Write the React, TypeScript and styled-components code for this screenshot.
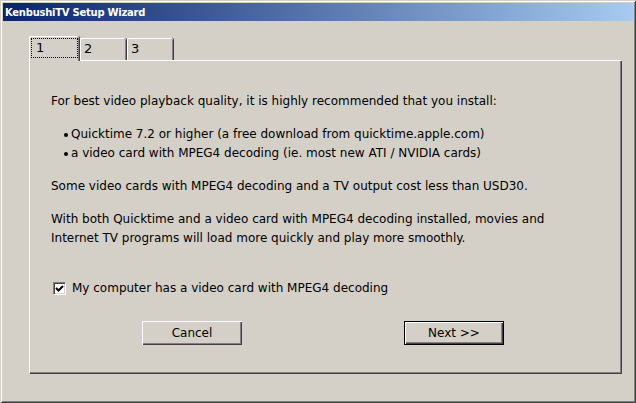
import React, { useState } from 'react'
import styled, { createGlobalStyle } from 'styled-components'

const GlobalStyle = createGlobalStyle`
  html, body {
    margin: 0;
    padding: 0;
    background: #d4d0c8;
  }
`

const tabs = ['1', '2', '3']

function App() {
  const [active, setActive] = useState(0)
  const [hasCard, setHasCard] = useState(true)

  return (
    <>
      <GlobalStyle />
      <Window>
        <TitleBar>KenbushiTV Setup Wizard</TitleBar>
        <Body>
          <TabStrip>
            {tabs.map((t, i) => (
              <Tab key={t} active={i === active} onClick={() => setActive(i)}>
                <TabLabel focused={i === active}>{t}</TabLabel>
              </Tab>
            ))}
          </TabStrip>
          <Panel>
            <Para>
              For best video playback quality, it is highly recommended that you install:
            </Para>
            <List>
              <li>Quicktime 7.2 or higher (a free download from quicktime.apple.com)</li>
              <li>a video card with MPEG4 decoding (ie. most new ATI / NVIDIA cards)</li>
            </List>
            <Para>Some video cards with MPEG4 decoding and a TV output cost less than USD30.</Para>
            <Para>
              With both Quicktime and a video card with MPEG4 decoding installed, movies and
              <br />
              Internet TV programs will load more quickly and play more smoothly.
            </Para>
            <CheckRow onClick={() => setHasCard(c => !c)}>
              <CheckBox>
                {hasCard && (
                  <svg width="9" height="9" viewBox="0 0 9 9">
                    <path d="M1 4 L3.5 6.5 L8 2" stroke="#000" strokeWidth="2" fill="none" />
                  </svg>
                )}
              </CheckBox>
              My computer has a video card with MPEG4 decoding
            </CheckRow>
            <ButtonRow>
              <Button>Cancel</Button>
              <Button primary>Next &gt;&gt;</Button>
            </ButtonRow>
          </Panel>
        </Body>
      </Window>
    </>
  )
}

const Window = styled.div`
  width: 636px;
  height: 403px;
  box-sizing: border-box;
  padding: 3px 3px 4px 3px;
  display: flex;
  flex-direction: column;
  background: #d4d0c8;
  box-shadow:
    inset 1px 1px #d4d0c8,
    inset -1px -1px #404040,
    inset 2px 2px #ffffff,
    inset -2px -2px #808080;
  font-family: 'DejaVu Sans', Verdana, sans-serif;
  font-size: 12px;
  color: #000;
`

const TitleBar = styled.div`
  height: 18px;
  display: flex;
  align-items: center;
  padding-left: 2px;
  background: linear-gradient(to right, #0a246a, #a6caf0);
  color: #fff;
  font-family: 'DejaVu Sans', Tahoma, sans-serif;
  font-weight: bold;
  font-size: 10px;
  letter-spacing: -0.25px;
`

const Body = styled.div`
  padding: 15px 0 0 26px;
`

const TabStrip = styled.div`
  display: flex;
  align-items: flex-end;
  height: 24px;
  position: relative;
  z-index: 1;
`

const Tab = styled.div<{ active: boolean }>`
  box-sizing: border-box;
  width: ${p => (p.active ? 50 : 46)}px;
  height: ${p => (p.active ? 25 : 22)}px;
  margin-bottom: ${p => (p.active ? -1 : 0)}px;
  padding: ${p => (p.active ? '2px 2px 0 2px' : '1px 2px 0 3px')};
  background: #d4d0c8;
  border-left: 1px solid #fff;
  border-top: 1px solid #fff;
  border-top-left-radius: 2px;
  border-top-right-radius: 2px;
  box-shadow: inset -1px 0 #808080, 1px 0 #404040;
  margin-right: 1px;
  cursor: default;
`

const TabLabel = styled.div<{ focused: boolean }>`
  height: 18px;
  line-height: 18px;
  padding-left: ${p => (p.focused ? 4 : 0)}px;
  font-size: 13px;
  outline: ${p => (p.focused ? '1px dotted #000' : 'none')};
`

const Panel = styled.div`
  box-sizing: border-box;
  width: 592px;
  height: 313px;
  padding: 31px 0 0 21px;
  border-left: 1px solid #fff;
  border-top: 1px solid #fff;
  box-shadow: inset -1px -1px #808080, 1px 1px #404040;
  line-height: 19px;
`

const Para = styled.p`
  margin: 0 0 14px 0;
`

const List = styled.ul`
  margin: 0 0 14px 0;
  padding: 0;
  list-style: none;
  li {
    padding-left: 20px;
    position: relative;
  }
  li::before {
    content: '';
    position: absolute;
    left: 13px;
    top: 8px;
    width: 4px;
    height: 4px;
    border-radius: 50%;
    background: #000;
  }
`

const CheckRow = styled.label`
  display: flex;
  align-items: center;
  gap: 6px;
  margin: 31px 0 0 2px;
  cursor: default;
`

const CheckBox = styled.span`
  box-sizing: border-box;
  width: 13px;
  height: 13px;
  display: flex;
  align-items: center;
  justify-content: center;
  background: #fff;
  border-top: 1px solid #808080;
  border-left: 1px solid #808080;
  border-right: 1px solid #fff;
  border-bottom: 1px solid #fff;
  box-shadow: inset 1px 1px #404040, inset -1px -1px #d4d0c8;
`

const ButtonRow = styled.div`
  display: flex;
  gap: 162px;
  margin: 23px 0 0 91px;
`

const Button = styled.button<{ primary?: boolean }>`
  box-sizing: border-box;
  width: 100px;
  height: 24px;
  padding: 0;
  background: #d4d0c8;
  font-family: 'DejaVu Sans', Tahoma, sans-serif;
  font-size: 12px;
  color: #000;
  border: ${p => (p.primary ? '1px solid #000' : 'none')};
  box-shadow: inset 1px 1px #fff, inset -1px -1px #404040, inset -2px -2px #808080;
`

export default App
